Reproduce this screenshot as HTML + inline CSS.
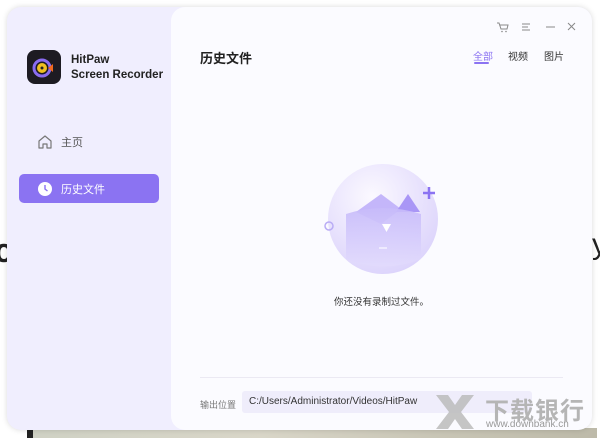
<!DOCTYPE html>
<html><head><meta charset="utf-8"><style>
*{margin:0;padding:0;box-sizing:border-box}
body{width:600px;height:438px;background:#fff;position:relative;overflow:hidden;font-family:"Liberation Sans","Noto Sans CJK SC",sans-serif}
.photo{position:absolute;left:27px;top:428px;width:570px;height:10px;background:linear-gradient(90deg,#cfd1c4,#d9d6c8 40%,#c9c6b6 70%,#bdbaa9);border-left:6px solid #222}
.bgc{position:absolute;left:-6px;top:232px;font-size:34px;font-weight:bold;color:#222}
.bgy{position:absolute;left:592px;top:228px;font-size:30px;color:#222}
.win{position:absolute;left:7px;top:7px;width:585px;height:423px;border-radius:14px;background:#f0eefe;box-shadow:0 0 6px rgba(0,0,0,.15);overflow:hidden}
.main{position:absolute;left:164px;top:0;right:0;bottom:0;background:#fbfbff;border-radius:14px}
.logo{position:absolute;left:20px;top:43px;width:34px;height:34px;border-radius:8px;background:#1d1b22}
.brand{position:absolute;left:64px;top:46px;font-size:11.5px;font-weight:bold;color:#222;line-height:15px}
.nav{position:absolute;left:12px;width:140px;height:29px;border-radius:5px;font-size:11px;color:#555;display:flex;align-items:center;padding-left:18px}
.nav span{margin-left:8px}
.act{background:#8b73f2;color:#fff}
</style></head><body>
<div class="bgc">c</div><div class="bgy">y</div>
<div class="photo"></div>
<div class="win">
<div class="logo"><svg width="34" height="34"><circle cx="15" cy="18" r="8" fill="none" stroke="#8a6cf0" stroke-width="3"/><circle cx="15" cy="18" r="5" fill="#f0c020"/><circle cx="15" cy="18" r="1.5" fill="#222"/><path d="M21 18l5-4v8z" fill="#f06a20"/></svg></div>
<div class="brand">HitPaw<br>Screen Recorder</div>
<div class="nav" style="top:120px"><svg width="16" height="16" viewBox="0 0 16 16"><path d="M2 7L8 2l6 5v7H10v-4H6v4H2z" fill="none" stroke="#777" stroke-width="1.2" stroke-linejoin="round"/></svg><span>主页</span></div>
<div class="nav act" style="top:167px"><svg width="16" height="16"><circle cx="8" cy="8" r="7" fill="#fff"/><path d="M8 4v4l2.5 2" stroke="#8b73f2" stroke-width="1.4" fill="none"/></svg><span>历史文件</span></div>
<div class="main">
<div style="position:absolute;left:29px;top:41px;font-size:13px;font-weight:bold;color:#222">历史文件</div>
<svg style="position:absolute;left:325px;top:14px" width="80" height="12"><path d="M1 2h2l2 6h6l1-4H4" fill="none" stroke="#888" stroke-width="1"/><circle cx="6" cy="10.5" r=".8" fill="#888"/><circle cx="10" cy="10.5" r=".8" fill="#888"/><path d="M26 3h8M26 6h6M26 9h8" stroke="#888" stroke-width="1"/><path d="M50 6h9" stroke="#888"/><path d="M72 2l7 7M79 2l-7 7" stroke="#888"/></svg>
<div style="position:absolute;left:302px;top:41px;font-size:10px;color:#8b73f2">全部</div>
<div style="position:absolute;left:303px;top:55px;width:15px;height:2px;background:#8b73f2;border-radius:1px"></div>
<div style="position:absolute;left:337px;top:41px;font-size:10px;color:#333">视频</div>
<div style="position:absolute;left:373px;top:41px;font-size:10px;color:#333">图片</div>
<svg style="position:absolute;left:145px;top:155px" width="130" height="120"><defs><radialGradient id="g" cx=".4" cy=".3" r=".8"><stop offset="0" stop-color="#fbf9ff"/><stop offset="1" stop-color="#d9d0fb"/></radialGradient><linearGradient id="b" x1="0" y1="0" x2="0" y2="1"><stop offset="0" stop-color="#c7bbfa"/><stop offset="1" stop-color="#e2dbfd"/></linearGradient></defs>
<circle cx="67" cy="57" r="55" fill="url(#g)"/><path d="M40 50l25-18 20 15-20 15z" fill="#c4b6fa"/><path d="M92 32l12 18h-24z" fill="#a996f6"/><path d="M30 52q37-12 75 0v45q-37 15-75 0z" fill="url(#b)" opacity=".9"/><path d="M66 62l9 0-4.5 8z" fill="#fff"/><path d="M63 86h8" stroke="#fff" stroke-width="1.5" opacity=".7"/><circle cx="13" cy="64" r="4" fill="none" stroke="#b9acf5" stroke-width="1.5"/><path d="M113 25v12M107 31h12" stroke="#8b73f2" stroke-width="2.5"/></svg>
<div style="position:absolute;left:0;right:0;top:287px;text-align:center;font-size:9.5px;color:#333">你还没有录制过文件。</div>
<div style="position:absolute;left:29px;right:29px;top:370px;height:1px;background:#ebe9f3"></div>
<div style="position:absolute;left:29px;top:391px;font-size:9px;color:#777">输出位置</div>
<div style="position:absolute;left:71px;top:384px;width:290px;height:22px;background:#efedfb;border-radius:3px;font-size:10px;color:#333;padding:5px 7px">C:/Users/Administrator/Videos/HitPaw</div>
</div></div>
<svg style="position:absolute;left:434px;top:393px" width="42" height="38"><path d="M2 2h12l7 10 7-10h12L27 19l13 17H28l-7-10-7 10H2l13-17z" fill="#bbb" opacity=".85"/></svg>
<div style="position:absolute;left:485px;top:391px;font-size:24px;color:#b5b5b5;font-weight:bold;letter-spacing:1px">下载银行</div>
<div style="position:absolute;left:486px;top:419px;font-size:10px;color:#999">www.downbank.cn</div>
</body></html>
